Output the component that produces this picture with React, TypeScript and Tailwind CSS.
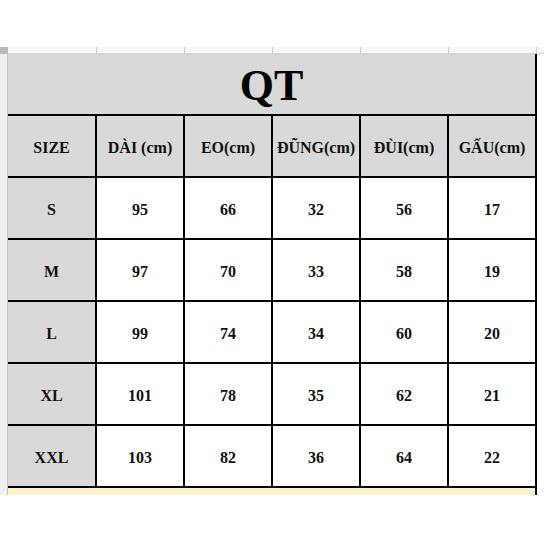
import React from "react";

const headers = ["SIZE", "DÀI (cm)", "EO(cm)", "ĐŨNG(cm)", "ĐÙI(cm)", "GẤU(cm)"];
const rows = [
  ["S", "95", "66", "32", "56", "17"],
  ["M", "97", "70", "33", "58", "19"],
  ["L", "99", "74", "34", "60", "20"],
  ["XL", "101", "78", "35", "62", "21"],
  ["XXL", "103", "82", "36", "64", "22"],
];

function Cell({ text, gray, first }: { text: string; gray: boolean; first: boolean }) {
  return (
    <div
      className={
        (first ? "w-[89px] " : "w-[88px] ") +
        (gray ? "bg-[#d9d9d9] " : "bg-white ") +
        "h-[62px] shrink-0 border-r-2 border-b-2 border-black flex items-center justify-center pt-[3px] text-[16px] font-bold text-[#111]"
      }
    >
      {text}
    </div>
  );
}

export default function App() {
  return (
    <div className="w-[544px] h-[544px] bg-white overflow-hidden font-['Liberation_Serif',_serif]">
      <div className="h-[47px]" />
      <div className="flex">
        <div className="w-[8px] flex flex-col shrink-0">
          <div className="h-[7px] bg-[#b9b9b9]" />
          <div className="h-[441px] bg-[#eef0f2] border-r border-[#c6c6c6]" />
        </div>
        <div className="flex flex-col">
          <div className="flex h-[7px] bg-[#f8f8f8] border-b border-[#d6d6d6]">
            <div className="w-[89px] border-r border-[#d0d0d0]" />
            <div className="w-[88px] border-r border-[#d0d0d0]" />
            <div className="w-[88px] border-r border-[#d0d0d0]" />
            <div className="w-[88px] border-r border-[#d0d0d0]" />
            <div className="w-[88px] border-r border-[#d0d0d0]" />
            <div className="w-[88px] border-r border-[#d0d0d0]" />
          </div>
          <div className="w-[529px] h-[62px] bg-[#d9d9d9] border-r-2 border-b-2 border-black flex items-center justify-center text-[44px] font-bold text-black leading-none pt-[4px]">
            QT
          </div>
          <div className="flex">
            {headers.map((h, i) => (
              <Cell key={h} text={h} gray first={i === 0} />
            ))}
          </div>
          {rows.map((r) => (
            <div className="flex" key={r[0]}>
              {r.map((c, i) => (
                <Cell key={i} text={c} gray={i === 0} first={i === 0} />
              ))}
            </div>
          ))}
          <div className="w-[529px] h-[7px] bg-[#fff2cc] border-r-2 border-black" />
        </div>
        <div className="flex-1 flex flex-col">
          <div className="h-[7px] bg-[#f8f8f8] border-b border-[#d6d6d6]" />
        </div>
      </div>
    </div>
  );
}
